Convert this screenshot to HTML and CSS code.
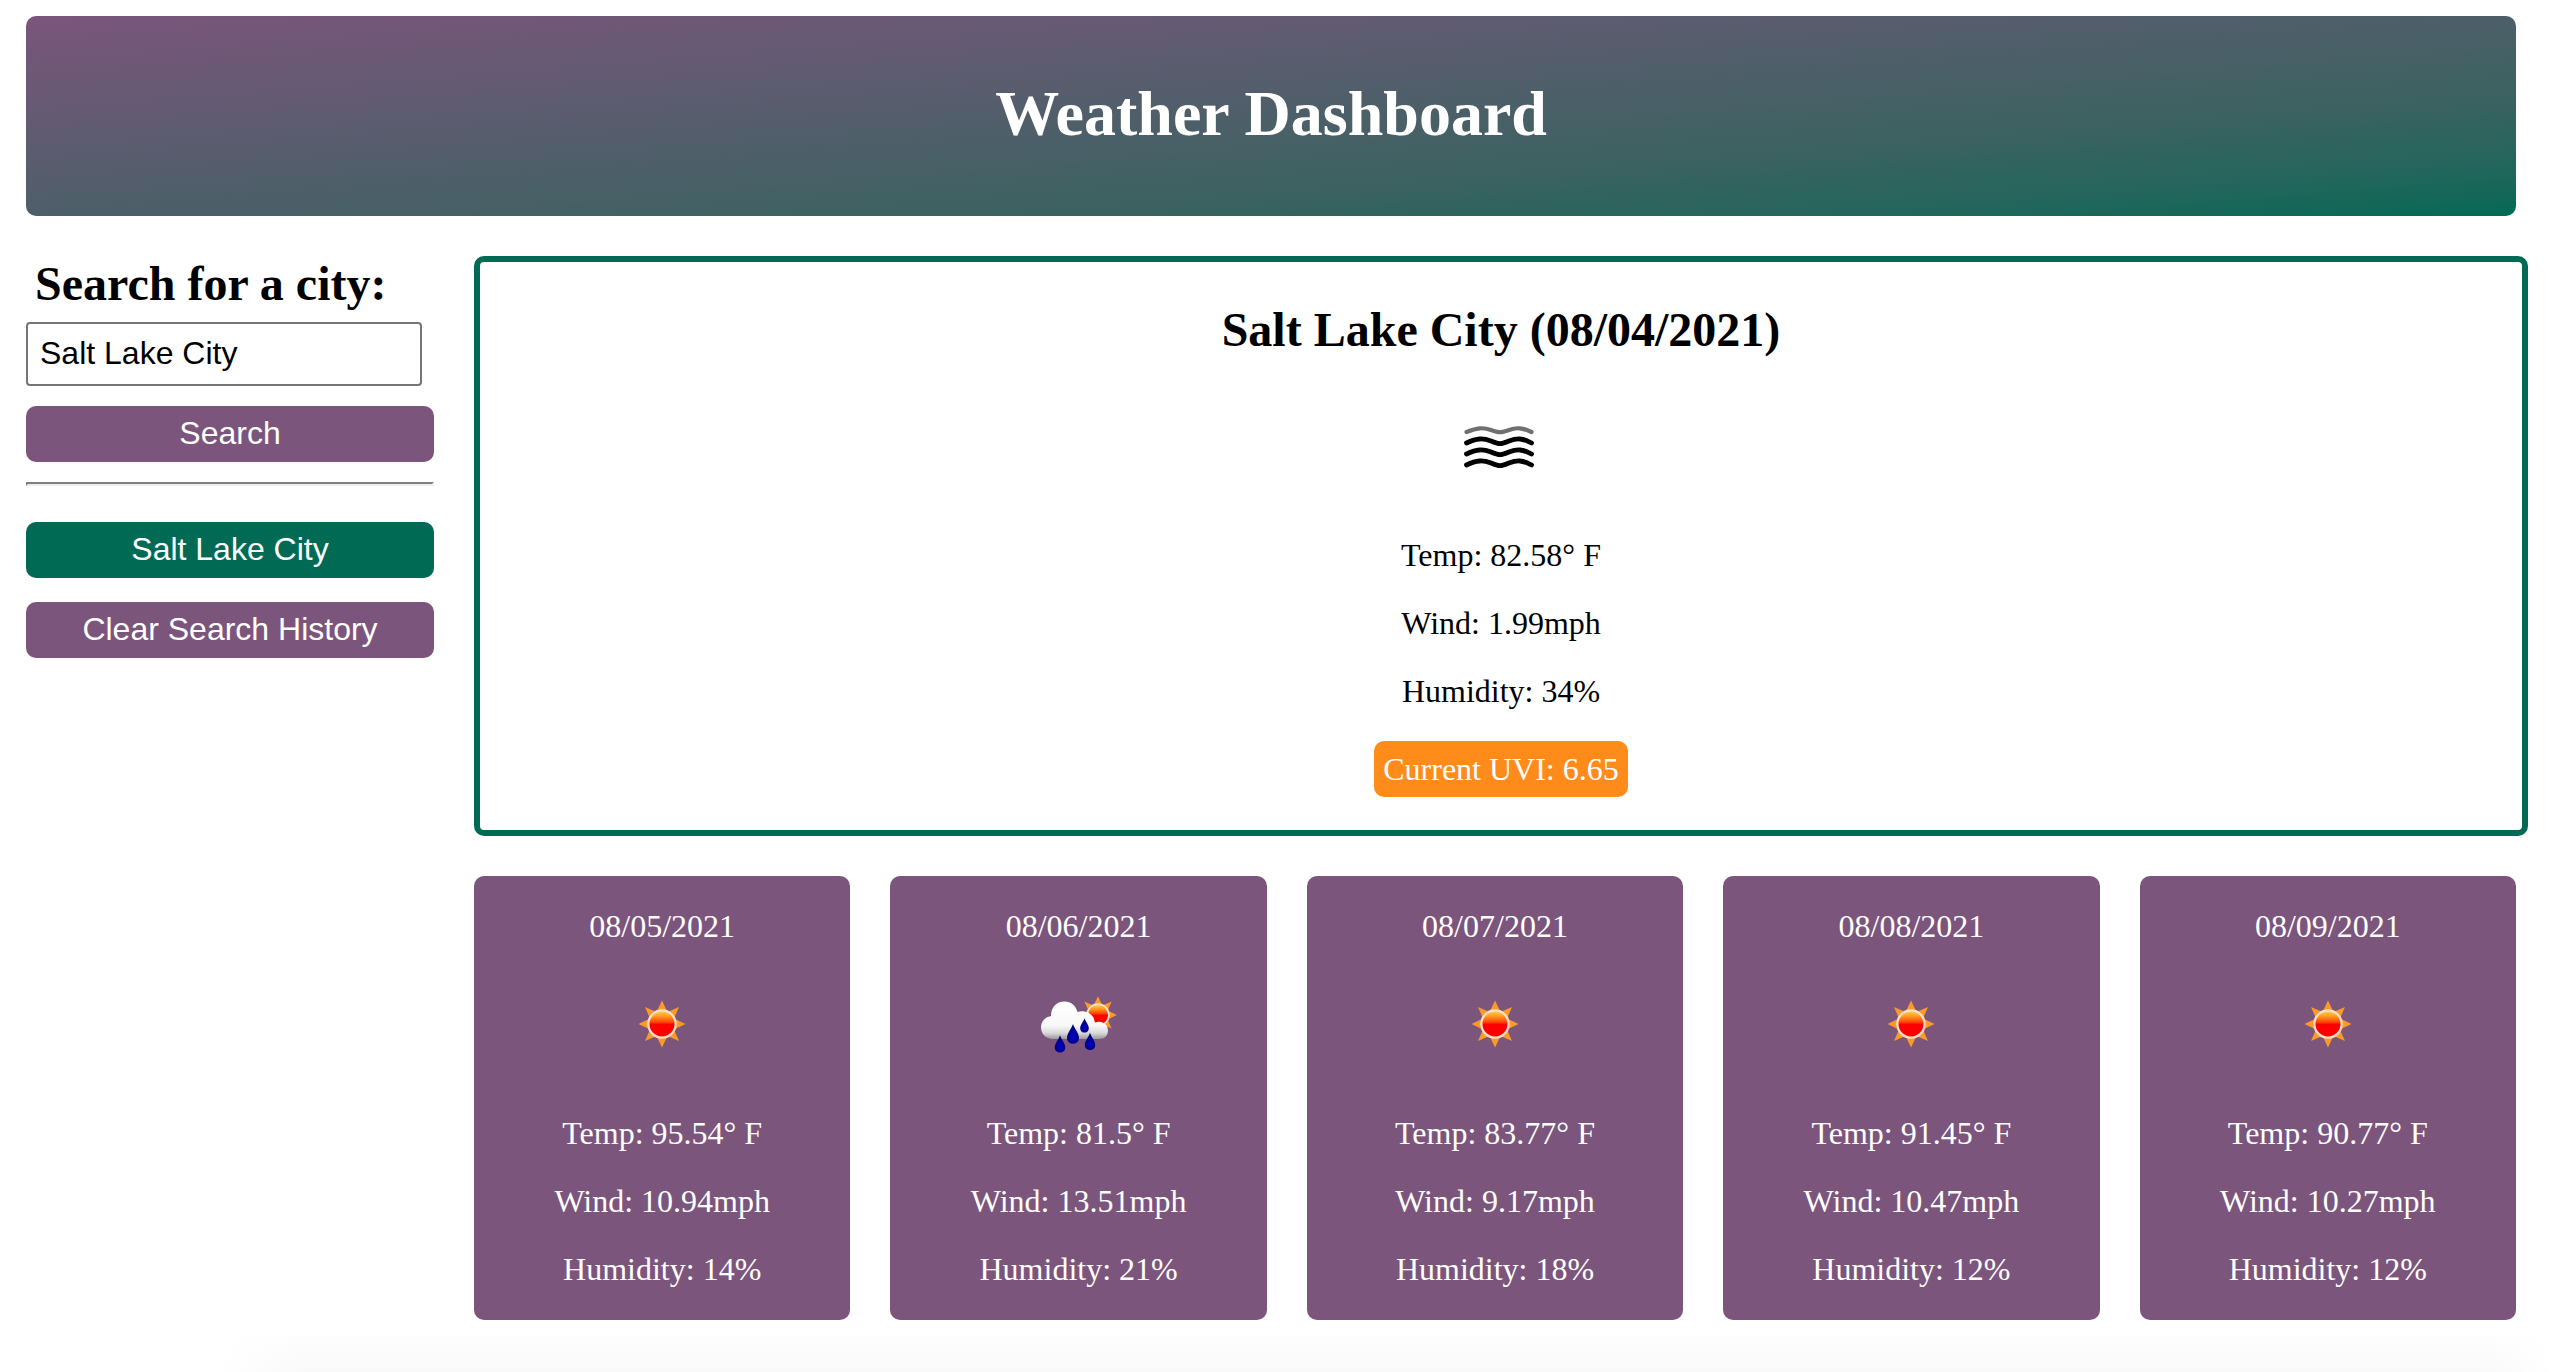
FILE: index.html
```html
<!DOCTYPE html>
<html lang="en">
<head>
<meta charset="utf-8">
<title>Weather Dashboard</title>
<link rel="stylesheet" href="styles.css">
</head>
<body>
<svg class="defs" width="0" height="0" aria-hidden="true">
  <defs>
    <linearGradient id="core" x1="0" y1="0" x2="0" y2="1">
      <stop offset="0" stop-color="#ffd768"/>
      <stop offset=".2" stop-color="#ff9f24"/>
      <stop offset=".42" stop-color="#ff4a0a"/>
      <stop offset=".52" stop-color="#fd0000"/>
      <stop offset="1" stop-color="#ff0400"/>
    </linearGradient>
    <linearGradient id="cloud" gradientUnits="userSpaceOnUse" x1="0" y1="28" x2="0" y2="66">
      <stop offset="0" stop-color="#fff"/>
      <stop offset=".62" stop-color="#f8f8f8"/>
      <stop offset=".82" stop-color="#d8d8d8"/>
      <stop offset="1" stop-color="#8e8e8e"/>
    </linearGradient>
    <radialGradient id="drop" cx=".5" cy=".65" r=".6">
      <stop offset="0" stop-color="#0000c8"/>
      <stop offset="1" stop-color="#000070"/>
    </radialGradient>
    <filter id="soft" x="-10%" y="-10%" width="120%" height="120%"><feGaussianBlur stdDeviation=".7"/></filter>
    <path id="tear" d="M0-10C1.500-5 6-1 6 4.200A6 5.600 0 0 1-6 4.200C-6-1-1.500-5 0-10Z" fill="url(#drop)"/>
    <g id="sun">
      <path fill="#fb9a26" d="M0-23.500L5.500-12L17-17L12-5.500L23.500 0L12 5.500L17 17L5.500 12L0 23.500L-5.500 12L-17 17L-12 5.500L-23.500 0L-12-5.500L-17-17L-5.500-12Z"/>
      <circle r="13.600" fill="url(#core)" stroke="#ffdfc4" stroke-width="2.200"/>
    </g>
    <symbol id="clear" viewBox="0 0 100 100">
      <g filter="url(#soft)"><use href="#sun" x="50" y="50"/></g>
    </symbol>
    <symbol id="rain" viewBox="0 0 100 100">
      <g filter="url(#soft)">
        <use href="#sun" transform="translate(69 41) scale(.8)"/>
        <path fill="url(#cloud)" d="M24 65C17 65 12 60 12 53.500C12 47 16.500 43 22 42C22 33 27.500 27.500 35.500 27.500C42 27.500 46.500 31 48.500 38C54 36 61 38 64.500 43.500L66 48.500C73 46 79 50 79 56.500C79 61.500 75.500 65 70 65Z"/>
        <use href="#tear" x="44" y="60"/>
        <use href="#tear" transform="translate(55.500 51.500) scale(.72)"/>
        <use href="#tear" transform="translate(31 70) scale(.88)"/>
        <use href="#tear" transform="translate(61 67.500) scale(.88)"/>
      </g>
    </symbol>
    <symbol id="mist" viewBox="0 0 100 100">
      <g filter="url(#soft)" fill="none" stroke="#000" stroke-width="4.800" stroke-linecap="round">
        <path stroke="#707070" stroke-width="4.200" d="M16.500 36C27 32 33 31 41 34C49 37 51 37 59 34C67 31 73 32 81.500 36"/>
        <path d="M16.500 47C27 42 33 42 41 45C49 48.500 51 48.500 59 45C67 42 73 42 81.500 47"/>
        <path d="M16.500 58C27 53 33 53 41 56C49 59.500 51 59.500 59 56C67 53 73 53 81.500 58"/>
        <path d="M16.500 69C27 64 33 64 41 67C49 70.500 51 70.500 59 67C67 64 73 64 81.500 69"/>
      </g>
    </symbol>
  </defs>
</svg>

<header class="banner"><h1>Weather Dashboard</h1></header>

<div class="layout">
  <aside class="sidebar">
    <h2>Search for a city:</h2>
    <input class="city-input" type="text" value="Salt Lake City">
    <button class="btn">Search</button>
    <hr>
    <button class="btn btn-history">Salt Lake City</button>
    <button class="btn">Clear Search History</button>
  </aside>

  <main class="content">
    <section class="current">
      <h2>Salt Lake City (08/04/2021)</h2>
      <svg class="icon"><use href="#mist"/></svg>
      <p>Temp: 82.58° F</p>
      <p>Wind: 1.99mph</p>
      <p>Humidity: 34%</p>
      <span class="uvi">Current UVI: 6.65</span>
    </section>

    <section class="forecast">
      <article class="day">
        <p>08/05/2021</p>
        <svg class="icon"><use href="#clear"/></svg>
        <p>Temp: 95.54° F</p>
        <p>Wind: 10.94mph</p>
        <p>Humidity: 14%</p>
      </article>
      <article class="day">
        <p>08/06/2021</p>
        <svg class="icon"><use href="#rain"/></svg>
        <p>Temp: 81.5° F</p>
        <p>Wind: 13.51mph</p>
        <p>Humidity: 21%</p>
      </article>
      <article class="day">
        <p>08/07/2021</p>
        <svg class="icon"><use href="#clear"/></svg>
        <p>Temp: 83.77° F</p>
        <p>Wind: 9.17mph</p>
        <p>Humidity: 18%</p>
      </article>
      <article class="day">
        <p>08/08/2021</p>
        <svg class="icon"><use href="#clear"/></svg>
        <p>Temp: 91.45° F</p>
        <p>Wind: 10.47mph</p>
        <p>Humidity: 12%</p>
      </article>
      <article class="day">
        <p>08/09/2021</p>
        <svg class="icon"><use href="#clear"/></svg>
        <p>Temp: 90.77° F</p>
        <p>Wind: 10.27mph</p>
        <p>Humidity: 12%</p>
      </article>
    </section>
  </main>
</div>
<div class="page-shade"></div>
</body>
</html>
```
FILE: styles.css
```css
:root {
  --purple: #7b557c;
  --green: #016a55;
}

* {
  box-sizing: border-box;
}

body {
  display: flex;
  flex-direction: column;
  height: 1372px;
  margin: 0;
  padding-top: 16px;
  overflow: hidden;
  background: #fff;
  color: #000;
  font: 32px/36px "Liberation Serif", "Times New Roman", serif;
}

h1, h2, p {
  margin: 0;
}

.defs {
  position: absolute;
}

.banner {
  display: flex;
  flex: none;
  align-items: center;
  justify-content: center;
  height: 200px;
  margin: 0 38px 40px 26px;
  padding-bottom: 4px;
  border-radius: 10px;
  background: linear-gradient(to bottom right, var(--purple), #4d5f69 50%, #3b6260 70%, #26655d 85%, #126858 95%, var(--green));
  color: #fff;
}

.banner h1 {
  font-size: 64px;
  line-height: 74px;
}

.layout {
  display: flex;
  gap: 40px;
  padding: 0 26px;
}

.sidebar {
  display: flex;
  flex: none;
  flex-direction: column;
  width: 408px;
}

.sidebar h2 {
  padding: 0 9px;
  font-size: 48px;
  line-height: 56px;
}

.city-input {
  width: 396px;
  height: 64px;
  margin: 10px 0 20px;
  padding: 0 12px 2px;
  border: 2px solid #767676;
  border-radius: 4px;
  background: #fff;
  color: #000;
  font: 32px "Liberation Sans", Arial, sans-serif;
}

.btn {
  height: 56px;
  padding: 0 0 2px;
  border: 0;
  border-radius: 10px;
  background: var(--purple);
  color: #fff;
  font: 32px "Liberation Sans", Arial, sans-serif;
}

.sidebar hr {
  width: 100%;
  height: 4px;
  margin: 20px 0 36px;
  border: 2px solid;
  border-color: #808080 #eee #eee #808080;
}

.btn-history {
  margin-bottom: 24px;
  background: var(--green);
}

.content {
  flex: 1;
}

.current {
  display: flex;
  flex-direction: column;
  align-items: center;
  height: 580px;
  padding-top: 40px;
  border: 6px solid var(--green);
  border-radius: 10px;
}

.current h2 {
  font-size: 48px;
  line-height: 56px;
}

.current .icon {
  margin: 38px 2px 41px 0;
}

.icon {
  flex: none;
  width: 100px;
  height: 100px;
}

.current p {
  margin-bottom: 32px;
}

.uvi {
  width: 254px;
  padding: 10px 0;
  border-radius: 10px;
  background: #ff8c1a;
  color: #fff;
  text-align: center;
}

.forecast {
  display: grid;
  grid-template-columns: repeat(5, 1fr);
  gap: 40px;
  margin: 40px 12px 0 0;
}

.day {
  display: flex;
  flex-direction: column;
  align-items: center;
  height: 444px;
  padding-top: 32px;
  border-radius: 10px;
  background: var(--purple);
  color: #fff;
}

.day .icon {
  margin: 30px 0 41px;
}

.day p + p {
  margin-top: 32px;
}

.page-shade {
  flex: none;
  height: 44px;
  margin-top: auto;
  background:
    linear-gradient(to right, #fff 220px, #fff0 310px, #fff0 2480px, #fff),
    linear-gradient(to bottom, #fff, #f9f9f9);
}
```
